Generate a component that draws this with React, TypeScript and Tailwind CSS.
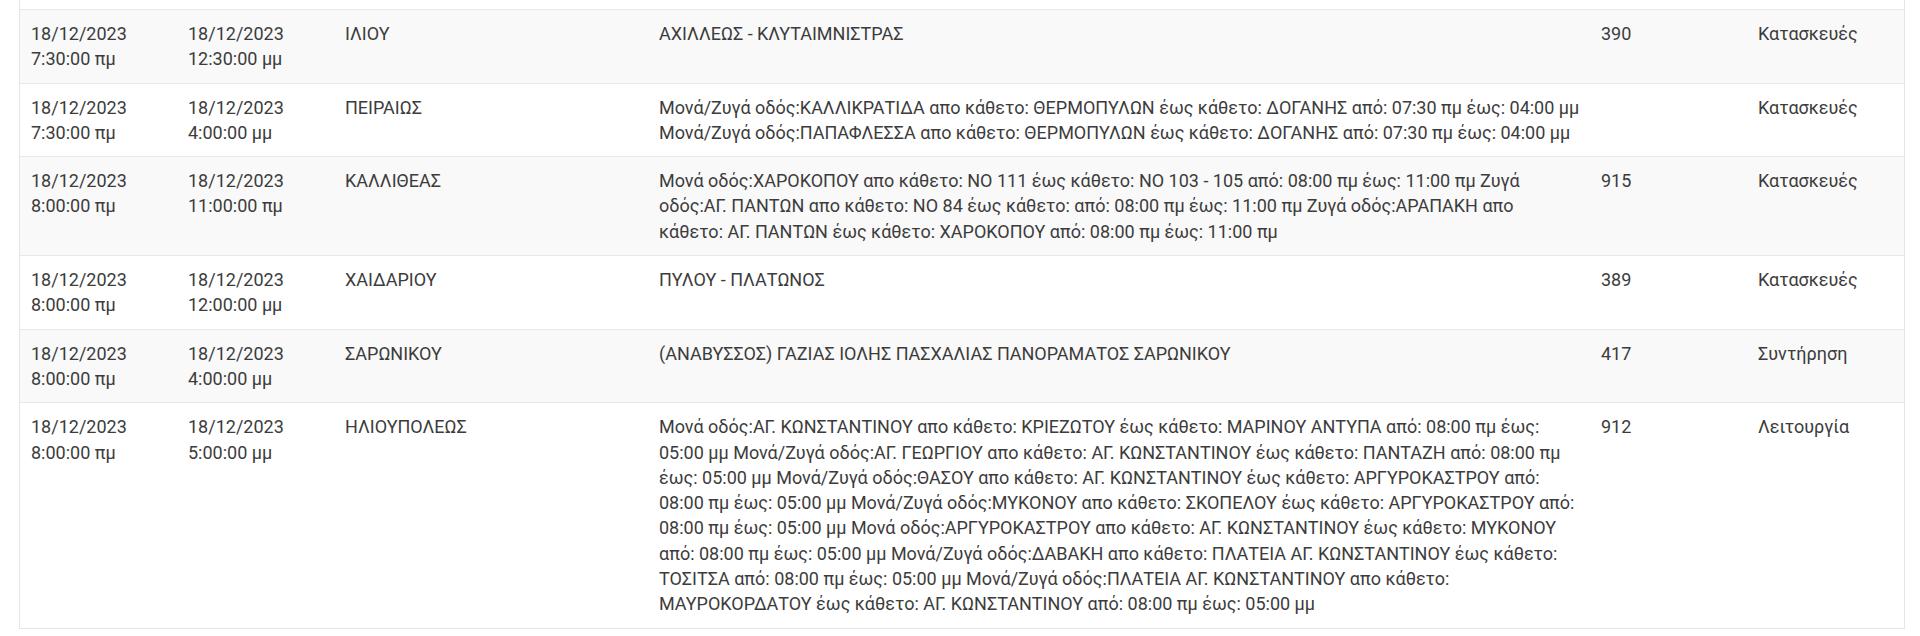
import React from "react";

type Row = {
  start: [string, string];
  end: [string, string];
  area: string;
  desc: string[];
  code: string;
  type: string;
};

const rows: Row[] = [
  {
    start: ["18/12/2023", "7:30:00 πμ"],
    end: ["18/12/2023", "12:30:00 μμ"],
    area: "ΙΛΙΟΥ",
    desc: ["ΑΧΙΛΛΕΩΣ - ΚΛΥΤΑΙΜΝΙΣΤΡΑΣ"],
    code: "390",
    type: "Κατασκευές",
  },
  {
    start: ["18/12/2023", "7:30:00 πμ"],
    end: ["18/12/2023", "4:00:00 μμ"],
    area: "ΠΕΙΡΑΙΩΣ",
    desc: [
      "Μονά/Ζυγά οδός:ΚΑΛΛΙΚΡΑΤΙΔΑ απο κάθετο: ΘΕΡΜΟΠΥΛΩΝ έως κάθετο: ΔΟΓΑΝΗΣ από: 07:30 πμ έως: 04:00 μμ",
      "Μονά/Ζυγά οδός:ΠΑΠΑΦΛΕΣΣΑ απο κάθετο: ΘΕΡΜΟΠΥΛΩΝ έως κάθετο: ΔΟΓΑΝΗΣ από: 07:30 πμ έως: 04:00 μμ",
    ],
    code: "",
    type: "Κατασκευές",
  },
  {
    start: ["18/12/2023", "8:00:00 πμ"],
    end: ["18/12/2023", "11:00:00 πμ"],
    area: "ΚΑΛΛΙΘΕΑΣ",
    desc: [
      "Μονά οδός:ΧΑΡΟΚΟΠΟΥ απο κάθετο: ΝΟ 111 έως κάθετο: ΝΟ 103 - 105 από: 08:00 πμ έως: 11:00 πμ Ζυγά",
      "οδός:ΑΓ. ΠΑΝΤΩΝ απο κάθετο: ΝΟ 84 έως κάθετο: από: 08:00 πμ έως: 11:00 πμ Ζυγά οδός:ΑΡΑΠΑΚΗ απο",
      "κάθετο: ΑΓ. ΠΑΝΤΩΝ έως κάθετο: ΧΑΡΟΚΟΠΟΥ από: 08:00 πμ έως: 11:00 πμ",
    ],
    code: "915",
    type: "Κατασκευές",
  },
  {
    start: ["18/12/2023", "8:00:00 πμ"],
    end: ["18/12/2023", "12:00:00 μμ"],
    area: "ΧΑΙΔΑΡΙΟΥ",
    desc: ["ΠΥΛΟΥ - ΠΛΑΤΩΝΟΣ"],
    code: "389",
    type: "Κατασκευές",
  },
  {
    start: ["18/12/2023", "8:00:00 πμ"],
    end: ["18/12/2023", "4:00:00 μμ"],
    area: "ΣΑΡΩΝΙΚΟΥ",
    desc: ["(ΑΝΑΒΥΣΣΟΣ) ΓΑΖΙΑΣ ΙΟΛΗΣ ΠΑΣΧΑΛΙΑΣ ΠΑΝΟΡΑΜΑΤΟΣ ΣΑΡΩΝΙΚΟΥ"],
    code: "417",
    type: "Συντήρηση",
  },
  {
    start: ["18/12/2023", "8:00:00 πμ"],
    end: ["18/12/2023", "5:00:00 μμ"],
    area: "ΗΛΙΟΥΠΟΛΕΩΣ",
    desc: [
      "Μονά οδός:ΑΓ. ΚΩΝΣΤΑΝΤΙΝΟΥ απο κάθετο: ΚΡΙΕΖΩΤΟΥ έως κάθετο: ΜΑΡΙΝΟΥ ΑΝΤΥΠΑ από: 08:00 πμ έως:",
      "05:00 μμ Μονά/Ζυγά οδός:ΑΓ. ΓΕΩΡΓΙΟΥ απο κάθετο: ΑΓ. ΚΩΝΣΤΑΝΤΙΝΟΥ έως κάθετο: ΠΑΝΤΑΖΗ από: 08:00 πμ",
      "έως: 05:00 μμ Μονά/Ζυγά οδός:ΘΑΣΟΥ απο κάθετο: ΑΓ. ΚΩΝΣΤΑΝΤΙΝΟΥ έως κάθετο: ΑΡΓΥΡΟΚΑΣΤΡΟΥ από:",
      "08:00 πμ έως: 05:00 μμ Μονά/Ζυγά οδός:ΜΥΚΟΝΟΥ απο κάθετο: ΣΚΟΠΕΛΟΥ έως κάθετο: ΑΡΓΥΡΟΚΑΣΤΡΟΥ από:",
      "08:00 πμ έως: 05:00 μμ Μονά οδός:ΑΡΓΥΡΟΚΑΣΤΡΟΥ απο κάθετο: ΑΓ. ΚΩΝΣΤΑΝΤΙΝΟΥ έως κάθετο: ΜΥΚΟΝΟΥ",
      "από: 08:00 πμ έως: 05:00 μμ Μονά/Ζυγά οδός:ΔΑΒΑΚΗ απο κάθετο: ΠΛΑΤΕΙΑ ΑΓ. ΚΩΝΣΤΑΝΤΙΝΟΥ έως κάθετο:",
      "ΤΟΣΙΤΣΑ από: 08:00 πμ έως: 05:00 μμ Μονά/Ζυγά οδός:ΠΛΑΤΕΙΑ ΑΓ. ΚΩΝΣΤΑΝΤΙΝΟΥ απο κάθετο:",
      "ΜΑΥΡΟΚΟΡΔΑΤΟΥ έως κάθετο: ΑΓ. ΚΩΝΣΤΑΝΤΙΝΟΥ από: 08:00 πμ έως: 05:00 μμ",
    ],
    code: "912",
    type: "Λειτουργία",
  },
];

function Cell({ span, children }: { span: string; children?: React.ReactNode }) {
  return <div className={`${span} px-[11px] py-[11px] min-w-0`}>{children}</div>;
}

function Lines({ lines }: { lines: string[] }) {
  return (
    <>
      {lines.map((l, i) => (
        <div key={i} className="whitespace-nowrap">
          {l}
        </div>
      ))}
    </>
  );
}

export default function App() {
  return (
    <div className="w-[1920px] h-[636px] bg-white overflow-hidden">
      <div
        className="ml-[19px] w-[1886px] border-x border-b border-[#e6e6e6] text-[18px] leading-[25.3px] text-[#3c3c3c]"
        style={{ fontFamily: "Roboto, 'Noto Sans', sans-serif" }}
      >
        <div className="h-[9px] bg-white" />
        {rows.map((r, i) => (
          <div
            key={i}
            className={`grid grid-cols-12 border-t border-[#e8e8e8] ${
              i % 2 === 0 ? "bg-[#f9f9f9]" : "bg-white"
            }`}
          >
            <Cell span="col-span-1">
              <Lines lines={r.start} />
            </Cell>
            <Cell span="col-span-1">
              <Lines lines={r.end} />
            </Cell>
            <Cell span="col-span-2">{r.area}</Cell>
            <Cell span="col-span-6">
              <Lines lines={r.desc} />
            </Cell>
            <Cell span="col-span-1">{r.code}</Cell>
            <Cell span="col-span-1">{r.type}</Cell>
          </div>
        ))}
      </div>
    </div>
  );
}
